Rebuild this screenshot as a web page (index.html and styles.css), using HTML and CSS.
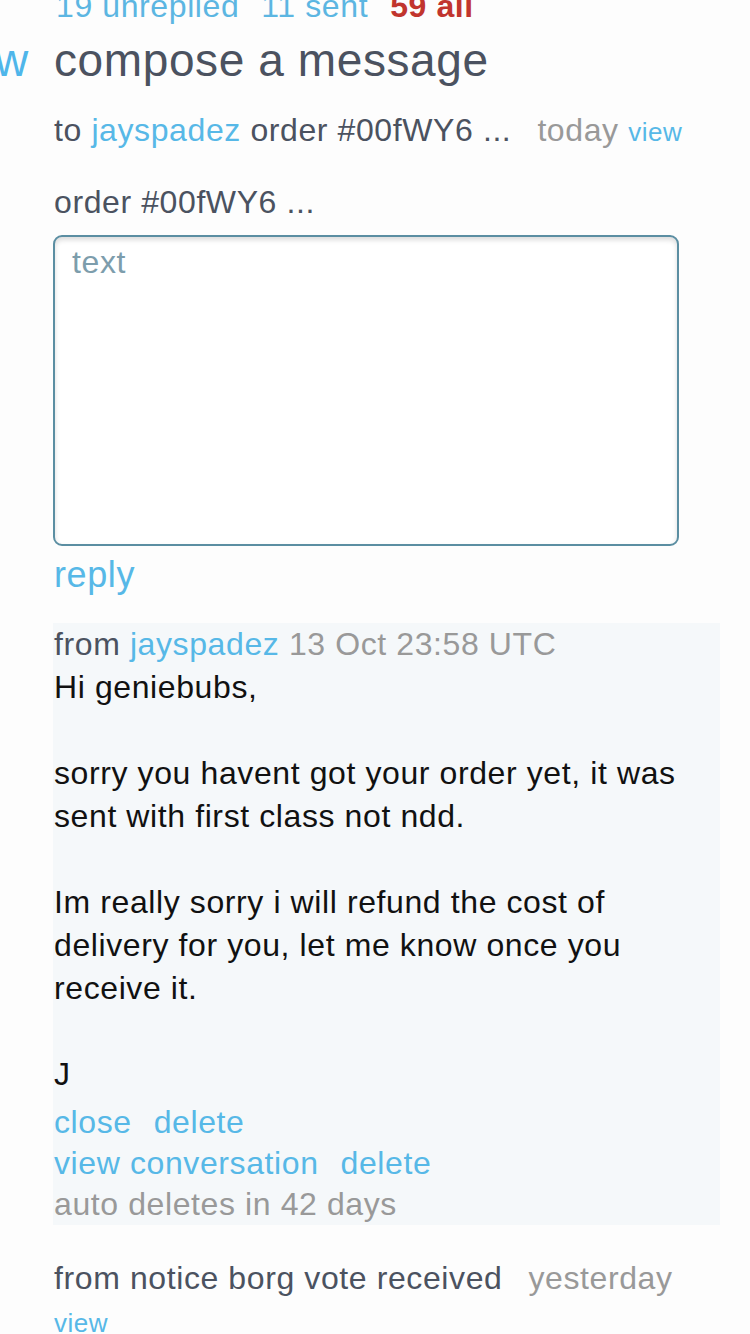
FILE: index.html
```html
<!DOCTYPE html>
<html>
<head>
<meta charset="utf-8">
<link rel="stylesheet" href="styles.css">
</head>
<body>
<div class="page">
  <nav class="tabs">
    <a class="tab">19 unreplied</a>
    <a class="tab">11 sent</a>
    <a class="tab active">59 all</a>
  </nav>
  <div class="heading-row">
    <span class="cut">w</span>
    <h1 class="heading">compose a message</h1>
  </div>
  <div class="item">to <a class="link">jayspadez</a> order #00fWY6 ...<span class="date">today</span> <a class="link small">view</a></div>
  <div class="subject">order #00fWY6 ...</div>
  <textarea class="compose" placeholder="text"></textarea>
  <a class="reply">reply</a>
  <div class="message">
    <div class="meta">from <a class="link">jayspadez</a> <span class="stamp">13 Oct 23:58 UTC</span></div>
    <div class="body">
      <p>Hi geniebubs,</p>
      <p>sorry you havent got your order yet, it was sent with first class not ndd.</p>
      <p>Im really sorry i will refund the cost of delivery for you, let me know once you receive it.</p>
      <p class="last">J</p>
    </div>
    <div class="actions">
      <div class="action-row"><a class="link">close</a><a class="link">delete</a></div>
      <div class="action-row"><a class="link">view conversation</a><a class="link">delete</a></div>
      <div class="expiry">auto deletes in 42 days</div>
    </div>
  </div>
  <div class="item next">from notice borg vote received<span class="date">yesterday</span> <a class="link small">view</a></div>
</div>
</body>
</html>
```
FILE: styles.css
```css
html, body {
  margin: 0;
  padding: 0;
  background: #fdfdfd;
  overflow-x: hidden;
}
body {
  font-family: "Liberation Sans", Arial, sans-serif;
  font-size: 32px;
  letter-spacing: 0.6px;
  line-height: 43px;
  color: #4b5260;
}
.page {
  padding-left: 54px;
  width: 666px;
}
a { text-decoration: none; cursor: pointer; }
.link { color: #57b8e7; }
.tabs {
  display: flex;
  gap: 22px;
  margin-top: -15px;
  padding-left: 2px;
}
.tab { color: #5cb6e2; }
.tab.active { color: #c1352e; font-weight: bold; }
.heading-row {
  display: flex;
  margin-left: -54px;
  margin-top: 4px;
  font-size: 46px;
  line-height: 56px;
}
.cut {
  width: 54px;
  flex: none;
  text-indent: -5px;
  color: #4fb6ea;
}
.heading {
  margin: 0;
  font-size: 46px;
  font-weight: normal;
  line-height: 56px;
  color: #4b5260;
}
.item {
  margin-top: 21px;
}
.date {
  color: #999;
  margin-left: 26px;
}
.small {
  font-size: 26px;
  letter-spacing: 0.5px;
  line-height: 1;
}
.subject {
  margin-top: 29px;
}
.compose {
  display: block;
  box-sizing: border-box;
  margin: 11px 0 0 -1px;
  width: 626px;
  height: 311px;
  border: 2px solid #5b8ea2;
  border-radius: 9px;
  box-shadow: inset 0 3px 5px rgba(0, 0, 0, 0.14);
  background: #fff;
  padding: 4px 17px 1px;
  font-family: "Liberation Sans", Arial, sans-serif;
  font-size: 32px;
  letter-spacing: 0.6px;
  line-height: 43px;
  resize: none;
  outline: none;
}
.compose::placeholder { color: #7d9dac; }
.reply {
  display: block;
  margin-top: 7px;
  font-size: 36px;
  color: #57b8e7;
}
.message {
  margin: 27px 0 0 -1px;
  width: 667px;
  padding-left: 1px;
  box-sizing: border-box;
  background: #f5f8fa;
}
.meta { color: #4b5260; }
.stamp { color: #999; }
.body { color: #111; }
.body p { margin: 0 0 43px; }
.body p.last { margin: 0; }
.actions {
  padding-top: 6px;
  line-height: 41px;
}
.action-row {
  display: flex;
  gap: 22px;
}
.expiry { color: #999; }
.item.next {
  margin-top: 32px;
}
```
